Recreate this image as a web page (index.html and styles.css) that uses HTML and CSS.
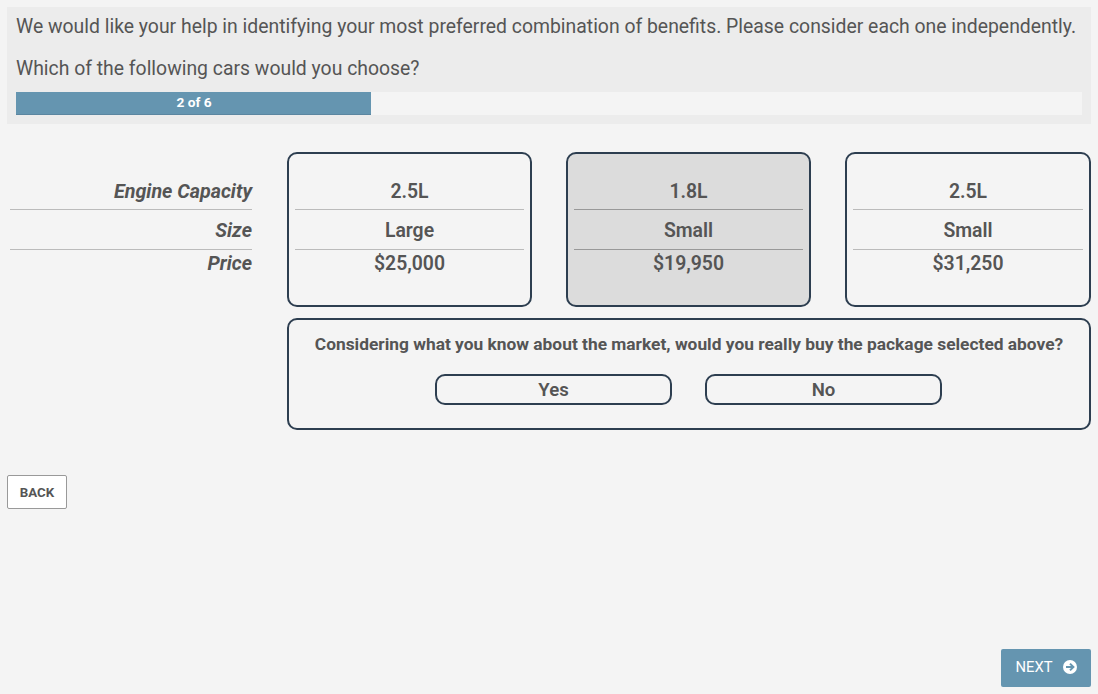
FILE: index.html
```html
<!DOCTYPE html>
<html lang="en">
<head>
    <meta charset="UTF-8">
    <meta name="viewport" content="width=device-width, initial-scale=1.0">
    <title>Which car would you choose</title>
    <link rel="stylesheet" href="styles.css">
</head>
<body>
    <div class="header">
        <p class="intro">We would like your help in identifying your most preferred combination of benefits. Please consider each one independently.</p>
        <p class="question">Which of the following cars would you choose?</p>
        <div class="progress">
            <div class="progress-bar">2 of 6</div>
        </div>
    </div>

    <div class="choices">
        <div class="labels">
            <div class="row row-first">Engine Capacity</div>
            <div class="row row-second">Size</div>
            <div class="row row-last">Price</div>
        </div>
        <div class="card">
            <div class="row row-first">2.5L</div>
            <div class="row row-second">Large</div>
            <div class="row row-last">$25,000</div>
        </div>
        <div class="card selected">
            <div class="row row-first">1.8L</div>
            <div class="row row-second">Small</div>
            <div class="row row-last">$19,950</div>
        </div>
        <div class="card">
            <div class="row row-first">2.5L</div>
            <div class="row row-second">Small</div>
            <div class="row row-last">$31,250</div>
        </div>
    </div>

    <div class="followup">
        <p>Considering what you know about the market, would you really buy the package selected above?</p>
        <div class="followup-buttons">
            <button type="button" class="answer">Yes</button>
            <button type="button" class="answer">No</button>
        </div>
    </div>

    <button type="button" class="back">BACK</button>

    <div class="footer">
        <button type="button" class="next">NEXT
            <svg class="next-icon" viewBox="0 0 14 14" width="14" height="14" aria-hidden="true">
                <circle cx="7" cy="7" r="7" fill="#fff"/>
                <path d="M3 7h7M7 3.6 10.4 7 7 10.4" fill="none" stroke="#6595b0" stroke-width="2"/>
            </svg>
        </button>
    </div>
</body>
</html>
```

FILE: styles.css
```css
* {
    margin: 0;
    padding: 0;
    box-sizing: border-box;
}

body {
    font-family: Roboto, "Liberation Sans", sans-serif;
    background: #f4f4f4;
    color: #555;
    padding: 7px;
    width: 1098px;
    height: 694px;
    overflow: hidden;
}

.header {
    background: #ececec;
    height: 117px;
    padding: 9px 9px 0;
}

.intro,
.question {
    font-size: 19.39px;
    line-height: 22px;
    white-space: nowrap;
}

.question {
    margin-top: 20px;
}

.progress {
    background: #f4f4f4;
    height: 23px;
    margin-top: 12px;
}

.progress-bar {
    background: #6595b0;
    border-bottom: 1px solid #5b86a0;
    color: #fff;
    font-size: 13.7px;
    font-weight: 700;
    line-height: 20px;
    padding: 0 0 2px 1px;
    text-align: center;
    width: 355px;
}

.choices {
    display: grid;
    grid-template-columns: 243px 245px 245px 246px;
    column-gap: 34px;
    margin-top: 28px;
    height: 155px;
    padding-left: 3px;
}

.labels {
    width: 242px;
    font-size: 19.7px;
    font-style: italic;
    font-weight: 700;
    text-align: right;
    padding-top: 2px;
}

.card {
    border: 2px solid #2d3e50;
    border-radius: 10px;
    font-size: 19.4px;
    font-weight: 600;
    text-align: center;
    padding: 0 6px;
    height: 155px;
}

.selected {
    background: #dcdcdc;
}

.row-first {
    height: 56px;
    padding-top: 26px;
    line-height: 24px;
    border-bottom: 1px solid #bbb;
}

.row-second {
    height: 40px;
    padding-top: 9px;
    line-height: 24px;
    border-bottom: 1px solid #bbb;
}

.row-last {
    line-height: 24px;
    height: 27px;
    padding-top: 2px;
}

.selected .row-first,
.selected .row-second {
    border-bottom-color: #999;
}

.followup {
    border: 2px solid #2d3e50;
    border-radius: 10px;
    margin: 11px 0 0 280px;
    width: 804px;
    height: 112px;
    padding-top: 14px;
    text-align: center;
}

.followup p {
    font-size: 17.35px;
    font-weight: 700;
    line-height: 20px;
    white-space: nowrap;
}

.followup-buttons {
    display: flex;
    gap: 33px;
    margin: 20px 0 0 146px;
}

.answer {
    background: #f4f4f4;
    border: 2px solid #2d3e50;
    border-radius: 10px;
    color: #555;
    font-family: inherit;
    font-size: 18.6px;
    font-weight: 600;
    height: 31px;
    width: 237px;
}

.back {
    display: block;
    background: #fff;
    border: 1px solid #999;
    border-radius: 2px;
    color: #555;
    font-family: inherit;
    font-size: 13.3px;
    font-weight: 700;
    height: 34px;
    margin-top: 45px;
    width: 60px;
}

.footer {
    display: flex;
    justify-content: flex-end;
    margin-top: 140px;
}

.next {
    display: flex;
    align-items: center;
    justify-content: center;
    gap: 10px;
    background: #6595b0;
    border: none;
    border-radius: 2px;
    color: #fff;
    font-family: inherit;
    font-size: 14.8px;
    height: 38px;
    padding-bottom: 2px;
    width: 90px;
}
```
